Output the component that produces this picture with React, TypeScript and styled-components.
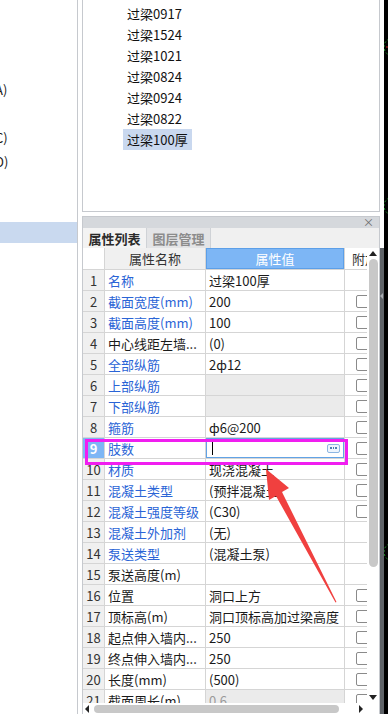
import React from 'react';
import styled, { createGlobalStyle } from 'styled-components';

interface Prop {
  no: number;
  name: string;
  value: string;
  link?: boolean;
  check?: boolean;
  disabled?: boolean;
  editing?: boolean;
}

const props: Prop[] = [
  { no: 1, name: '名称', value: '过梁100厚', link: true },
  { no: 2, name: '截面宽度(mm)', value: '200', link: true, check: true },
  { no: 3, name: '截面高度(mm)', value: '100', link: true, check: true },
  { no: 4, name: '中心线距左墙...', value: '(0)', check: true },
  { no: 5, name: '全部纵筋', value: '2ф12', link: true, check: true },
  { no: 6, name: '上部纵筋', value: '', link: true, check: true, disabled: true },
  { no: 7, name: '下部纵筋', value: '', link: true, check: true, disabled: true },
  { no: 8, name: '箍筋', value: 'ф6@200', link: true, check: true },
  { no: 9, name: '肢数', value: '', link: true, check: true, editing: true },
  { no: 10, name: '材质', value: '现浇混凝土', link: true, check: true },
  { no: 11, name: '混凝土类型', value: '(预拌混凝土)', link: true, check: true },
  { no: 12, name: '混凝土强度等级', value: '(C30)', link: true, check: true },
  { no: 13, name: '混凝土外加剂', value: '(无)', link: true },
  { no: 14, name: '泵送类型', value: '(混凝土泵)', link: true },
  { no: 15, name: '泵送高度(m)', value: '' },
  { no: 16, name: '位置', value: '洞口上方', check: true },
  { no: 17, name: '顶标高(m)', value: '洞口顶标高加过梁高度', check: true },
  { no: 18, name: '起点伸入墙内...', value: '250', check: true },
  { no: 19, name: '终点伸入墙内...', value: '250', check: true },
  { no: 20, name: '长度(mm)', value: '(500)', check: true },
  { no: 21, name: '截面周长(m)', value: '0.6', check: true, disabled: true },
];

const beams = ['过梁0917', '过梁1524', '过梁1021', '过梁0824', '过梁0924', '过梁0822', '过梁100厚'];

const GlobalStyle = createGlobalStyle`
  html, body {
    margin: 0;
    padding: 0;
    background: #fff;
  }
  body {
    font-family: "Noto Sans CJK SC", "Noto Sans", sans-serif;
    font-size: 13px;
    color: #1a1a1a;
  }
  #root {
    width: 388px;
    height: 714px;
    overflow: hidden;
  }
`;

const Screen = styled.div`
  position: relative;
  display: flex;
  width: 388px;
  height: 714px;
  overflow: hidden;
  background: #fff;
`;

const TreePane = styled.div`
  width: 77px;
  flex: none;
  border-right: 1px solid #c6c9ce;
  padding-top: 78px;
  display: flex;
  flex-direction: column;
`;

const TreeRow = styled.div<{ $selected?: boolean }>`
  height: ${p => (p.$selected ? 21 : 24)}px;
  line-height: 24px;
  white-space: nowrap;
  overflow: hidden;
  text-indent: -5px;
  color: #1a1a1a;
  background: ${p => (p.$selected ? '#c9d9ef' : 'transparent')};
`;

const Gutter = styled.div`
  width: 4px;
  flex: none;
`;

const RightColumn = styled.div`
  width: 298px;
  flex: none;
  display: flex;
  flex-direction: column;
`;

const ListBox = styled.div`
  height: 212px;
  flex: none;
  box-sizing: border-box;
  border: 1px solid #c6c9ce;
  border-top: none;
  margin-bottom: 4px;
  padding: 3px 0 0 40px;
  display: flex;
  flex-direction: column;
  align-items: flex-start;
`;

const ListItem = styled.div<{ $selected?: boolean }>`
  height: 21px;
  line-height: 21px;
  padding: 0 4px;
  color: #111;
  background: ${p => (p.$selected ? '#c9d8ef' : 'transparent')};
`;

const PropPanel = styled.div`
  flex: 1;
  min-height: 0;
  display: flex;
  flex-direction: column;
  border: 1px solid #c6c9ce;
  border-bottom: none;
`;

const TitleBar = styled.div`
  height: 11px;
  flex: none;
  background: #d5d8dc;
  display: flex;
  justify-content: flex-end;
  align-items: center;
  padding-right: 5px;
  font-size: 11px;
  line-height: 11px;
  color: #6a6a6a;
`;

const TabStrip = styled.div`
  height: 20px;
  flex: none;
  display: flex;
  background: #f0f0f0;
`;

const Tab = styled.div<{ $active?: boolean }>`
  width: 64px;
  box-sizing: border-box;
  border-right: 1px solid #cfd2d6;
  display: flex;
  align-items: center;
  justify-content: center;
  font-size: 13px;
  font-weight: bold;
  color: ${p => (p.$active ? '#2b2b2b' : '#8c8c8c')};
  background: ${p => (p.$active ? '#f3f3f3' : '#e3e4e6')};
`;

const GridBody = styled.div`
  flex: 1;
  min-height: 0;
  display: flex;
  flex-direction: column;
`;

const GridMain = styled.div`
  flex: 1;
  min-height: 0;
  display: flex;
`;

const Viewport = styled.div`
  flex: 1;
  overflow: hidden;
`;

const Row = styled.div<{ $header?: boolean }>`
  display: grid;
  grid-template-columns: 22px 101px 139px 40px;
  height: ${p => (p.$header ? 22 : 21)}px;
`;

const Cell = styled.div`
  box-sizing: border-box;
  border-right: 1px solid #d5d5d5;
  border-bottom: 1px solid #d5d5d5;
  padding: 0 3px;
  display: flex;
  align-items: center;
  overflow: hidden;
  white-space: nowrap;
`;

const HeadCell = styled(Cell)<{ $accent?: boolean; $blank?: boolean; $inset?: number }>`
  justify-content: ${p => (p.$blank ? 'flex-start' : 'center')};
  padding-left: ${p => p.$inset ?? 3}px;
  background: ${p => (p.$accent ? '#7db6f5' : p.$blank ? '#fff' : '#f0f0f0')};
  color: ${p => (p.$accent ? '#fff' : '#333')};
  ${p => p.$accent && 'box-shadow: inset 0 0 0 1px #5c9fe8;'}
`;

const NumCell = styled(Cell)<{ $selected?: boolean }>`
  justify-content: center;
  padding: 0;
  background: ${p => (p.$selected ? '#7db6f5' : '#f0f0f0')};
  color: ${p => (p.$selected ? '#fff' : '#333')};
  font-weight: ${p => (p.$selected ? 'bold' : 'normal')};
`;

const NameCell = styled(Cell)<{ $link?: boolean }>`
  color: ${p => (p.$link ? '#2a64d6' : '#1a1a1a')};
`;

const ValueCell = styled(Cell)<{ $disabled?: boolean; $editing?: boolean }>`
  background: ${p => (p.$disabled ? '#ebebeb' : '#fff')};
  color: ${p => (p.$disabled ? '#9a9a9a' : '#1a1a1a')};
  ${p => p.$editing && 'box-shadow: inset 0 0 0 1px #62a3e6; justify-content: space-between; padding-right: 4px;'}
`;

const Caret = styled.span`
  width: 1px;
  height: 13px;
  margin-left: 3px;
  background: #000;
`;

const MoreButton = styled.span`
  width: 13px;
  height: 9px;
  box-sizing: border-box;
  border: 1px solid #8db6e2;
  border-radius: 2px;
  background: #eef5fd;
  display: flex;
  align-items: center;
  justify-content: center;
  gap: 1px;

  & i {
    width: 1.5px;
    height: 1.5px;
    background: #4f7fb3;
  }
`;

const CheckCell = styled(Cell)`
  padding-left: 11px;
`;

const Checkbox = styled.span`
  width: 13px;
  height: 13px;
  box-sizing: border-box;
  border: 1px solid #8a8a8a;
  border-radius: 2px;
  background: #fff;
  flex: none;
`;

const VScroll = styled.div`
  width: 12px;
  flex: none;
  display: flex;
  flex-direction: column;
  align-items: center;
  background: #fff;
`;

const Arrow = styled.span<{ $dir: 'up' | 'down' | 'left' | 'right' }>`
  width: 0;
  height: 0;
  flex: none;
  ${p =>
    p.$dir === 'up'
      ? 'border-left: 4px solid transparent; border-right: 4px solid transparent; border-bottom: 5px solid #222; margin: 3px 0 2px;'
      : p.$dir === 'down'
      ? 'border-left: 4px solid transparent; border-right: 4px solid transparent; border-top: 5px solid #222; margin: 0 0 3px;'
      : p.$dir === 'left'
      ? 'border-top: 4px solid transparent; border-bottom: 4px solid transparent; border-right: 4px solid #222;'
      : 'border-top: 4px solid transparent; border-bottom: 4px solid transparent; border-left: 4px solid #222;'}
`;

const VThumb = styled.div`
  width: 9px;
  height: 308px;
  margin-top: 1px;
  border-radius: 5px;
  background: #c8c8c8;
`;

const Grow = styled.div`
  flex: 1;
`;

const HScroll = styled.div`
  height: 11px;
  flex: none;
  display: flex;
`;

const HTrack = styled.div`
  flex: 1;
  display: flex;
  align-items: center;
  padding: 0 4px 0 2px;
`;

const HThumb = styled.div`
  width: 245px;
  height: 8px;
  margin-left: 5px;
  border-radius: 4px;
  background: #c8c8c8;
`;

const Corner = styled.div`
  width: 12px;
  flex: none;
`;

const Splitter = styled.div`
  width: 4px;
  flex: none;
  display: flex;
  flex-direction: column;
`;

const SplitterGrip = styled.div`
  flex: 1;
  margin-top: 248px;
  background: #5f6368;
  padding-top: 45px;

  & span {
    display: block;
    width: 0;
    height: 0;
    border-top: 3px solid transparent;
    border-bottom: 3px solid transparent;
    border-right: 3px solid #a8abb0;
  }
`;

const CadCanvas = styled.div`
  width: 4px;
  flex: none;
  background: #000;
  overflow: hidden;
`;

const Highlight = styled.div`
  position: absolute;
  left: 85px;
  top: 439px;
  width: 263px;
  height: 26px;
  box-sizing: border-box;
  border: 3px solid #f01ef0;
  pointer-events: none;
`;

const Overlay = styled.svg`
  position: absolute;
  left: 0;
  top: 0;
  pointer-events: none;
`;

function PropertyRow({ p }: { p: Prop }) {
  return (
    <Row>
      <NumCell $selected={p.editing}>{p.no}</NumCell>
      <NameCell $link={p.link}>{p.name}</NameCell>
      <ValueCell $disabled={p.disabled} $editing={p.editing}>
        {p.editing ? (
          <>
            <Caret />
            <MoreButton>
              <i />
              <i />
              <i />
            </MoreButton>
          </>
        ) : (
          p.value
        )}
      </ValueCell>
      <CheckCell>{p.check && <Checkbox />}</CheckCell>
    </Row>
  );
}

export default function App() {
  return (
    <>
      <GlobalStyle />
      <Screen>
        <TreePane>
          <TreeRow>A)</TreeRow>
          <TreeRow />
          <TreeRow>C)</TreeRow>
          <TreeRow>D)</TreeRow>
          <TreeRow />
          <TreeRow />
          <TreeRow $selected />
        </TreePane>
        <Gutter />
        <RightColumn>
          <ListBox>
            {beams.map((b, i) => (
              <ListItem key={b} $selected={i === beams.length - 1}>
                {b}
              </ListItem>
            ))}
          </ListBox>
          <PropPanel>
            <TitleBar>×</TitleBar>
            <TabStrip>
              <Tab $active>属性列表</Tab>
              <Tab>图层管理</Tab>
            </TabStrip>
            <GridBody>
              <GridMain>
                <Viewport>
                  <Row $header>
                    <HeadCell $blank />
                    <HeadCell>属性名称</HeadCell>
                    <HeadCell $accent>属性值</HeadCell>
                    <HeadCell $blank $inset={7}>附加</HeadCell>
                  </Row>
                  {props.map(p => (
                    <PropertyRow key={p.no} p={p} />
                  ))}
                </Viewport>
                <VScroll>
                  <Arrow $dir="up" />
                  <VThumb />
                  <Grow />
                  <Arrow $dir="down" />
                </VScroll>
              </GridMain>
              <HScroll>
                <HTrack>
                  <Arrow $dir="left" />
                  <HThumb />
                  <Grow />
                  <Arrow $dir="right" />
                </HTrack>
                <Corner />
              </HScroll>
            </GridBody>
          </PropPanel>
        </RightColumn>
        <Splitter>
          <SplitterGrip>
            <span />
          </SplitterGrip>
        </Splitter>
        <CadCanvas>
          <svg width="4" height="714" viewBox="384 0 4 714">
            <g fill="none" stroke="#1f9a2a" strokeWidth="1" strokeDasharray="2 2">
              <circle cx="393" cy="47" r="9" />
              <circle cx="393" cy="206" r="9" />
              <circle cx="393" cy="552" r="9" />
            </g>
            <line x1="386" y1="47" x2="388" y2="47" stroke="#d02020" />
          </svg>
        </CadCanvas>
        <Highlight />
        <Overlay width="388" height="714" viewBox="0 0 388 714">
          <polygon
            points="266,469 289,488 282,492 336.5,602 335.5,602.5 276,496 269,500"
            fill="#f0403f"
          />
        </Overlay>
      </Screen>
    </>
  );
}
